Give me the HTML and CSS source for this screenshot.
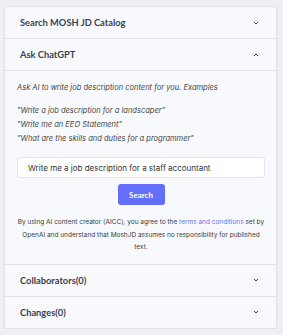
FILE: index.html
```html
<!DOCTYPE html>
<html lang="en">
<head>
  <meta charset="UTF-8" />
  <title>MoshJD Sidebar</title>
  <link rel="stylesheet" href="styles.css">
</head>
<body>
  <div class="panel">
    <div class="section">
      <div class="section-head">
        <span>Search MOSH JD Catalog</span>
        <svg class="chev" width="6" height="4" viewBox="0 0 6 4"><path d="M1 1l2 2 2-2" fill="none" stroke="#3a3f4f" stroke-width="1"/></svg>
      </div>
    </div>
    <div class="section">
      <div class="section-head">
        <span>Ask ChatGPT</span>
        <svg class="chev" width="6" height="4" viewBox="0 0 6 4"><path d="M1 3l2-2 2 2" fill="none" stroke="#3a3f4f" stroke-width="1"/></svg>
      </div>
      <div class="section-body">
        <p class="intro">Ask AI to write job description content for you. Examples</p>
        <div class="examples">
          <p>"Write a job description for a landscaper"</p>
          <p>"Write me an EEO Statement"</p>
          <p>"What are the skills and duties for a programmer"</p>
        </div>
        <input class="prompt" type="text" value="Write me a job description for a staff accountant" />
        <div class="actions">
          <button class="search-btn">Search</button>
        </div>
        <p class="disclaimer">By using AI content creator (AICC), you agree to the <a href="#">terms and conditions</a> set by OpenAI and understand that MoshJD assumes no responsibility for published text.</p>
      </div>
    </div>
    <div class="section">
      <div class="section-head">
        <span>Collaborators(0)</span>
        <svg class="chev" width="6" height="4" viewBox="0 0 6 4"><path d="M1 1l2 2 2-2" fill="none" stroke="#3a3f4f" stroke-width="1"/></svg>
      </div>
    </div>
    <div class="section">
      <div class="section-head">
        <span>Changes(0)</span>
        <svg class="chev" width="6" height="4" viewBox="0 0 6 4"><path d="M1 1l2 2 2-2" fill="none" stroke="#3a3f4f" stroke-width="1"/></svg>
      </div>
    </div>
  </div>
</body>
</html>
```

FILE: styles.css
```css
* {
  margin: 0;
  padding: 0;
  box-sizing: border-box;
}
body {
  background: #eef0f5;
  font-family: 'Inter', sans-serif;
  color: #333;
  padding: 6px 6px 0 4px;
}
.panel {
  background: #f8f9fc;
  border: 1px solid #dfe2ea;
  border-radius: 3px;
  box-shadow: 0 1px 2px rgba(0,0,0,0.08);
}
.section {
  border-bottom: 1px solid #dfe2ea;
}
.section:last-child {
  border-bottom: none;
}
.section-head {
  display: flex;
  justify-content: space-between;
  align-items: center;
  height: 31px;
  padding: 0 17px 0 15px;
  font-family: 'Lato', sans-serif;
  font-weight: bold;
  font-size: 9.3px;
  color: #3a3f4f;
}
.section-body {
  border-top: 1px solid #dfe2ea;
  padding: 12px 11px 10px 12px;
}
.intro, .examples p {
  font-style: italic;
  font-size: 7.5px;
  color: #444;
}
.intro {
  line-height: 10px;
}
.examples {
  margin-top: 13px;
  display: flex;
  flex-direction: column;
  gap: 4px;
}
.examples p {
  line-height: 10px;
}
.prompt {
  display: block;
  width: 100%;
  height: 21px;
  margin-top: 13px;
  border: 1px solid #e2e4ea;
  border-radius: 3px;
  background: #fff;
  padding: 0 10px;
  font-family: 'Inter', sans-serif;
  font-size: 8px;
  color: #333;
}
.actions {
  display: flex;
  justify-content: center;
  margin-top: 6px;
}
.search-btn {
  width: 47px;
  height: 21px;
  background: #636ffa;
  color: #fff;
  border: none;
  border-radius: 3px;
  font-family: 'Lato', sans-serif;
  font-weight: bold;
  font-size: 8px;
}
.disclaimer {
  margin: 11px 0 0;
  text-align: center;
  font-size: 6.5px;
  line-height: 12.5px;
  color: #3a3a3a;
}
.disclaimer a {
  color: #6a72f0;
  text-decoration: none;
}
```
